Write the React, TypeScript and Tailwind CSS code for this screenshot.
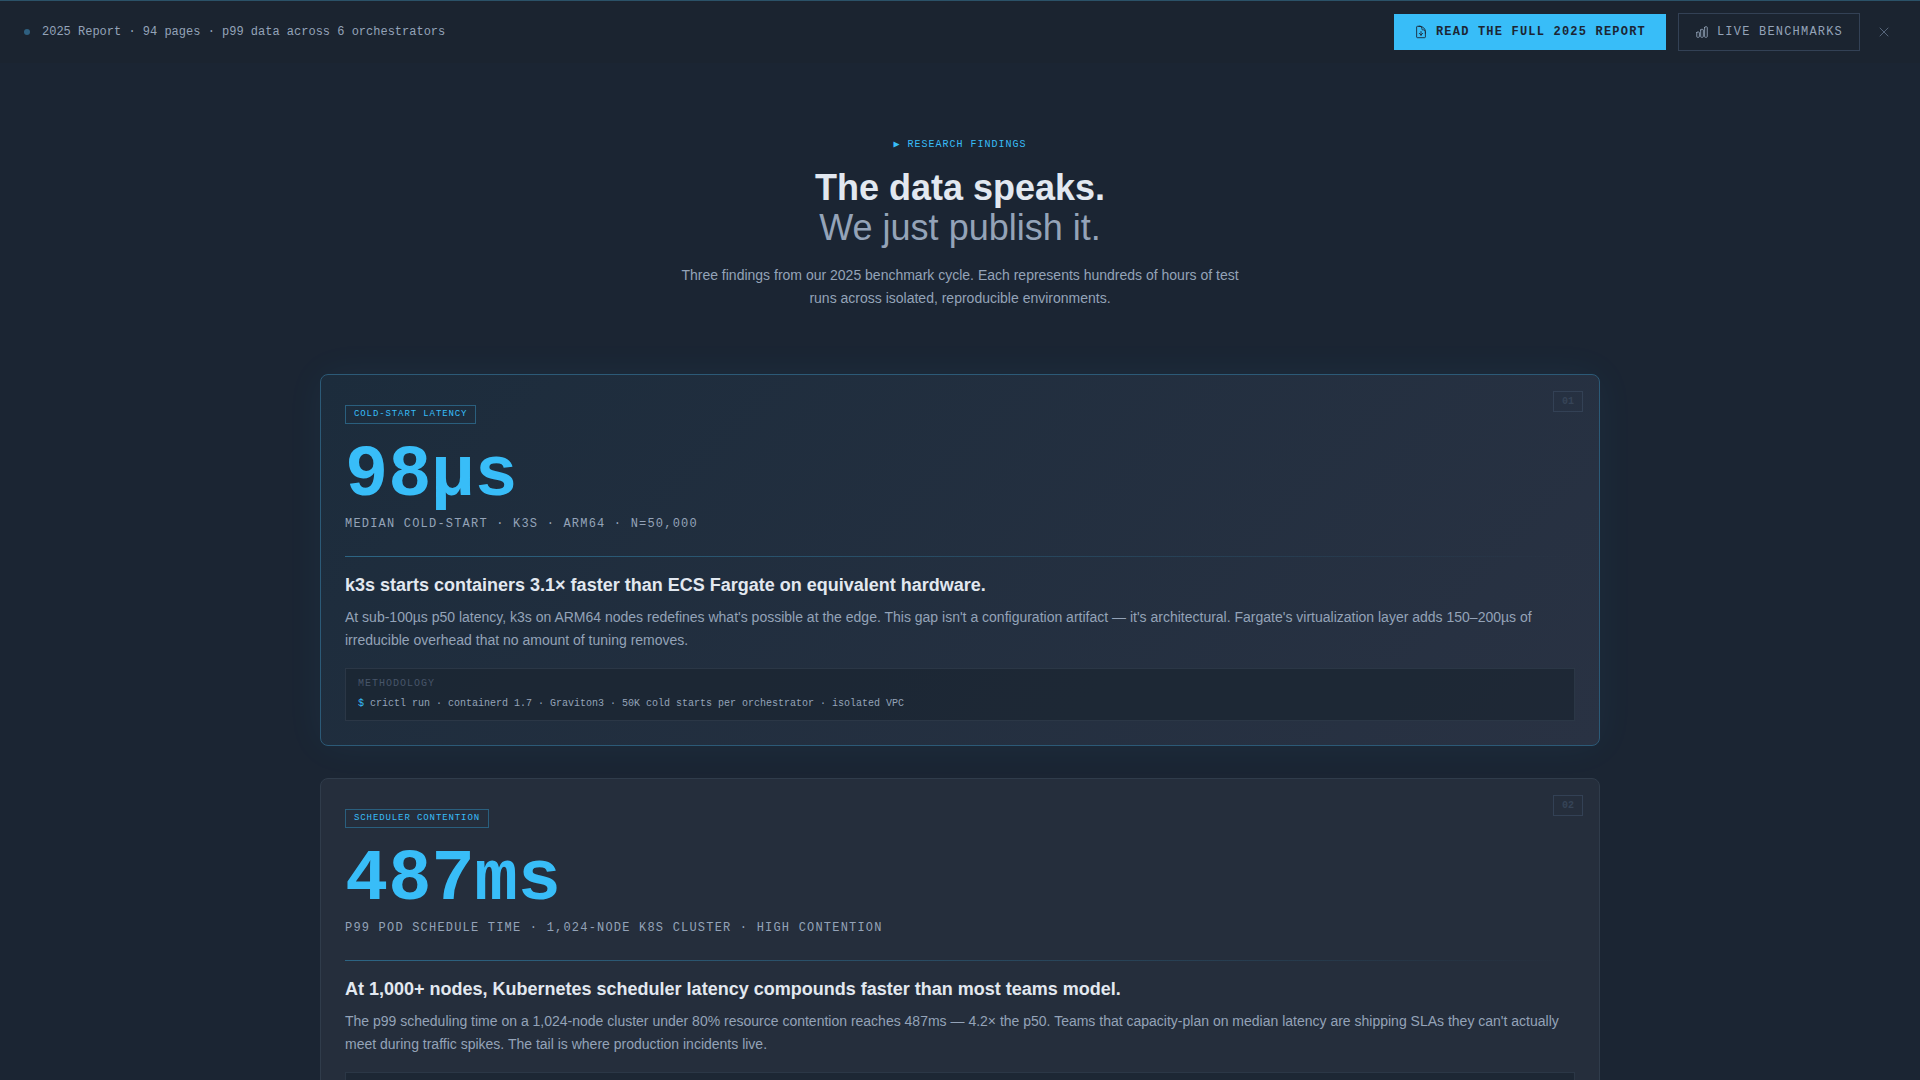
import { HiOutlineChartBar, HiOutlineDocumentArrowDown, HiOutlineXMark } from "react-icons/hi2";

type Finding = {
  id: string;
  tag: string;
  stat: string;
  label: string;
  title: string;
  body: string;
  method?: string;
  featured?: boolean;
};

const findings: Finding[] = [
  {
    id: "01",
    tag: "COLD-START LATENCY",
    stat: "98µs",
    label: "MEDIAN COLD-START · K3S · ARM64 · N=50,000",
    title: "k3s starts containers 3.1× faster than ECS Fargate on equivalent hardware.",
    body: "At sub-100µs p50 latency, k3s on ARM64 nodes redefines what's possible at the edge. This gap isn't a configuration artifact — it's architectural. Fargate's virtualization layer adds 150–200µs of irreducible overhead that no amount of tuning removes.",
    method: "crictl run · containerd 1.7 · Graviton3 · 50K cold starts per orchestrator · isolated VPC",
    featured: true,
  },
  {
    id: "02",
    tag: "SCHEDULER CONTENTION",
    stat: "487ms",
    label: "P99 POD SCHEDULE TIME · 1,024-NODE K8S CLUSTER · HIGH CONTENTION",
    title: "At 1,000+ nodes, Kubernetes scheduler latency compounds faster than most teams model.",
    body: "The p99 scheduling time on a 1,024-node cluster under 80% resource contention reaches 487ms — 4.2× the p50. Teams that capacity-plan on median latency are shipping SLAs they can't actually meet during traffic spikes. The tail is where production incidents live.",
  },
];

const mono = "font-['Liberation_Mono',monospace]";

function Card({ f }: { f: Finding }) {
  return (
    <article
      className={
        f.featured
          ? "relative rounded-lg border border-[#2c5a77] bg-linear-135 from-[#1c2c3c] to-[#293243] px-6 pt-[30px] pb-6 shadow-[0_0_40px_rgba(56,189,248,0.05)]"
          : "relative rounded-lg border border-[#303c4b] bg-[#252e3c] px-6 pt-[30px] pb-6"
      }
    >
      <span className={`${mono} absolute top-4 right-4 border border-[#334155] px-2 py-[3px] text-[10px] leading-[13px] font-bold text-[#364457]`}>
        {f.id}
      </span>
      <div className="flex">
        <span className={`${mono} border border-[#2a5f7e] px-2 pt-0.5 pb-[3px] text-[9px] leading-3 tracking-widest text-[#38bdf8]`}>
          {f.tag}
        </span>
      </div>
      <p className={`${mono} mt-4 text-7xl leading-none font-bold text-[#38bdf8]`}>{f.stat}</p>
      <p className={`${mono} mt-1 text-xs leading-4 tracking-widest text-[#94a3b8]`}>{f.label}</p>
      <div className="mt-6 h-px bg-linear-to-r from-[#2d6584] to-transparent" />
      <h3 className="mt-4 text-lg leading-6 font-bold text-[#e2e8f0]">{f.title}</h3>
      <p className="mt-[9px] text-sm leading-[23px] text-[#94a3b8]">{f.body}</p>
      <div className={`${mono} mt-4 border border-[#2b3746] bg-[#1b2531]/75 px-3 pt-[7px] pb-2 text-[10px]`}>
        <p className="leading-4 tracking-widest text-[#475569]">METHODOLOGY</p>
        {f.method && (
          <p className="mt-1 leading-4 text-[#94a3b8]">
            <span className="text-[#38bdf8]">$</span> {f.method}
          </p>
        )}
      </div>
    </article>
  );
}

export default function App() {
  return (
    <div className="h-screen overflow-hidden bg-[#1b2533] font-['Liberation_Sans',Arial,sans-serif]">
      <header className={`${mono} flex items-center justify-between border-t border-[#2b5268] bg-[#1b2430] px-6 py-3 text-xs`}>
        <div className="flex items-center gap-3 text-[#94a3b8]">
          <span className="size-1.5 rounded-full bg-[#2f6080]" />
          <p>2025 Report · 94 pages · p99 data across 6 orchestrators</p>
        </div>
        <div className="flex items-center gap-3">
          <button className="flex h-9 items-center gap-2 bg-[#38bdf8] px-5 font-bold tracking-widest text-[#1c2533]">
            <HiOutlineDocumentArrowDown size={14} />
            READ THE FULL 2025 REPORT
          </button>
          <button className="flex h-[38px] items-center gap-2 border border-[#334155] px-4 tracking-widest text-[#94a3b8]">
            <HiOutlineChartBar size={14} />
            LIVE BENCHMARKS
          </button>
          <button aria-label="Dismiss" className="flex size-6 items-center justify-center text-[#56657a]">
            <HiOutlineXMark size={16} />
          </button>
        </div>
      </header>
      <main className="mx-auto max-w-[1280px] pt-[74px]">
        <div className="flex flex-col items-center text-center">
          <p className={`${mono} text-[10px] leading-4 tracking-widest text-[#38bdf8]`}>▶ RESEARCH FINDINGS</p>
          <h2 className="mt-[15px] text-4xl leading-10 font-bold text-[#e2e8f0]">
            The data speaks.
            <br />
            <span className="font-normal text-[#94a3b8]">We just publish it.</span>
          </h2>
          <p className="mt-4 max-w-xl text-sm leading-[23px] text-[#94a3b8]">
            Three findings from our 2025 benchmark cycle. Each represents hundreds of hours of test runs across isolated, reproducible environments.
          </p>
        </div>
        <div className="mt-16 flex flex-col gap-8">
          {findings.map((f) => (
            <Card key={f.id} f={f} />
          ))}
        </div>
      </main>
    </div>
  );
}
